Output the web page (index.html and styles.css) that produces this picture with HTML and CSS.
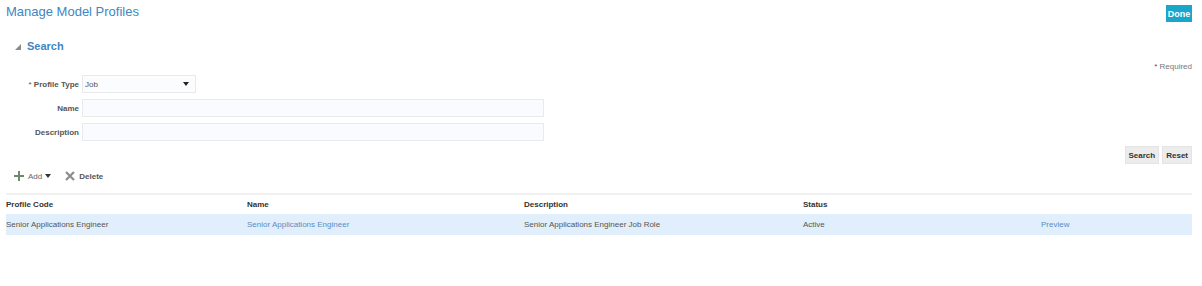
FILE: index.html
```html
<!DOCTYPE html>
<html>
<head>
  <title>Manage Model Profiles</title>
  <link rel="stylesheet" href="styles.css">
</head>
<body>
  <div class="page-header">
    <h1>Manage Model Profiles</h1>
    <button class="done-btn"><u>D</u>one</button>
  </div>

  <div class="search-head">
    <span class="disclosure"></span>
    <h2>Search</h2>
  </div>

  <div class="required-note"><span class="star">*</span> Required</div>

  <div class="search-form">
    <div class="form-row">
      <label><span class="star">*</span> Profile Type</label>
      <div class="select-box">
        <span>Job</span>
        <span class="caret"></span>
      </div>
    </div>
    <div class="form-row">
      <label>Name</label>
      <div class="text-box"></div>
    </div>
    <div class="form-row">
      <label>Description</label>
      <div class="text-box"></div>
    </div>
  </div>

  <div class="search-actions">
    <button class="plain-btn">Search</button>
    <button class="plain-btn">Reset</button>
  </div>

  <div class="toolbar">
    <span class="tool">
      <svg width="12" height="12" viewBox="0 0 12 12"><path d="M5 1h2v4h4v2H7v4H5V7H1V5h4z" fill="#6d8a6a"/></svg>
      <span class="tool-muted">Add</span>
      <span class="caret small"></span>
    </span>
    <span class="tool">
      <svg width="12" height="12" viewBox="0 0 12 12"><path d="M2 2l8 8M10 2l-8 8" stroke="#8c8c8c" stroke-width="2.2"/></svg>
      <span>Delete</span>
    </span>
  </div>

  <table class="results">
    <thead>
      <tr>
        <th class="c1">Profile Code</th>
        <th class="c2">Name</th>
        <th class="c3">Description</th>
        <th class="c4">Status</th>
        <th></th>
      </tr>
    </thead>
    <tbody>
      <tr class="selected">
        <td>Senior Applications Engineer</td>
        <td><a href="#">Senior Applications Engineer</a></td>
        <td>Senior Applications Engineer Job Role</td>
        <td>Active</td>
        <td><a href="#">Preview</a></td>
      </tr>
    </tbody>
  </table>
</body>
</html>
```

FILE: styles.css
```css
body {
  font-family: "Liberation Sans", Arial, sans-serif;
  margin: 0;
  padding: 0 10px 0 6px;
  color: #333;
  background: #fff;
}

.page-header {
  display: flex;
  justify-content: space-between;
  align-items: flex-start;
  padding-top: 4px;
}

h1 {
  margin: 0;
  font-size: 13px;
  font-weight: normal;
  color: #3f86c2;
  line-height: 16px;
}

.done-btn {
  margin-top: 1px;
  width: 26px;
  height: 17px;
  padding: 0;
  border: none;
  background: #1aa5cb;
  color: #fff;
  font-family: inherit;
  font-size: 9px;
  font-weight: bold;
}

.done-btn u {
  text-decoration: none;
}

.search-head {
  display: flex;
  align-items: center;
  margin-top: 17px;
  padding-left: 9px;
  height: 14px;
}

.disclosure {
  width: 0;
  height: 0;
  border-left: 6px solid transparent;
  border-bottom: 6px solid #8a8a8a;
  margin-right: 6px;
  margin-top: 2px;
}

h2 {
  margin: 0;
  font-size: 11px;
  font-weight: bold;
  color: #3f86c2;
}

.required-note {
  text-align: right;
  font-size: 8px;
  color: #777;
  margin-top: 9px;
  height: 10px;
}

.star {
  color: #555;
  vertical-align: top;
  font-size: 8px;
}

.search-form {
  margin-top: 3px;
}

.form-row {
  display: flex;
  align-items: center;
  margin-bottom: 6px;
}

.form-row label {
  width: 73px;
  text-align: right;
  padding-right: 3px;
  font-size: 8px;
  font-weight: bold;
  color: #555;
}

.form-row label .star {
  font-weight: normal;
}

.select-box {
  display: flex;
  justify-content: space-between;
  align-items: center;
  width: 104px;
  height: 16px;
  padding: 0 6px 0 2px;
  border: 1px solid #e8eaee;
  background: #fbfcfe;
  font-size: 8px;
  color: #555;
}

.caret {
  width: 0;
  height: 0;
  border-left: 3px solid transparent;
  border-right: 3px solid transparent;
  border-top: 4px solid #222;
}

.caret.small {
  border-top-color: #333;
}

.text-box {
  width: 460px;
  height: 16px;
  border: 1px solid #e8eaee;
  background: #fafbfe;
}

.search-actions {
  display: flex;
  justify-content: flex-end;
  gap: 3px;
  margin-top: -1px;
}

.plain-btn {
  height: 18px;
  padding: 0 3px;
  border: 1px solid #e4e4e4;
  background: #ececec;
  color: #333;
  font-family: inherit;
  font-size: 8px;
  font-weight: bold;
}

.toolbar {
  display: flex;
  align-items: center;
  gap: 13px;
  margin-top: 5px;
  padding-left: 7px;
  height: 14px;
  font-size: 8px;
  font-weight: bold;
  color: #555;
}

.tool {
  display: flex;
  align-items: center;
  gap: 3px;
}

.tool-muted {
  font-weight: normal;
  color: #666;
}

.results {
  width: 100%;
  margin-top: 10px;
  border-collapse: collapse;
  font-size: 8px;
  border-top: 2px solid #f0f0f0;
}

.results th {
  text-align: left;
  font-weight: bold;
  color: #333;
  height: 19px;
  padding: 0;
}

.results td {
  height: 21px;
  padding: 0;
  color: #555;
}

.results .c1 { width: 241px; }
.results .c2 { width: 277px; }
.results .c3 { width: 279px; }
.results .c4 { width: 238px; }

.selected {
  background: #e1effc;
}

.results a {
  color: #5a8cc4;
  text-decoration: none;
}
```
